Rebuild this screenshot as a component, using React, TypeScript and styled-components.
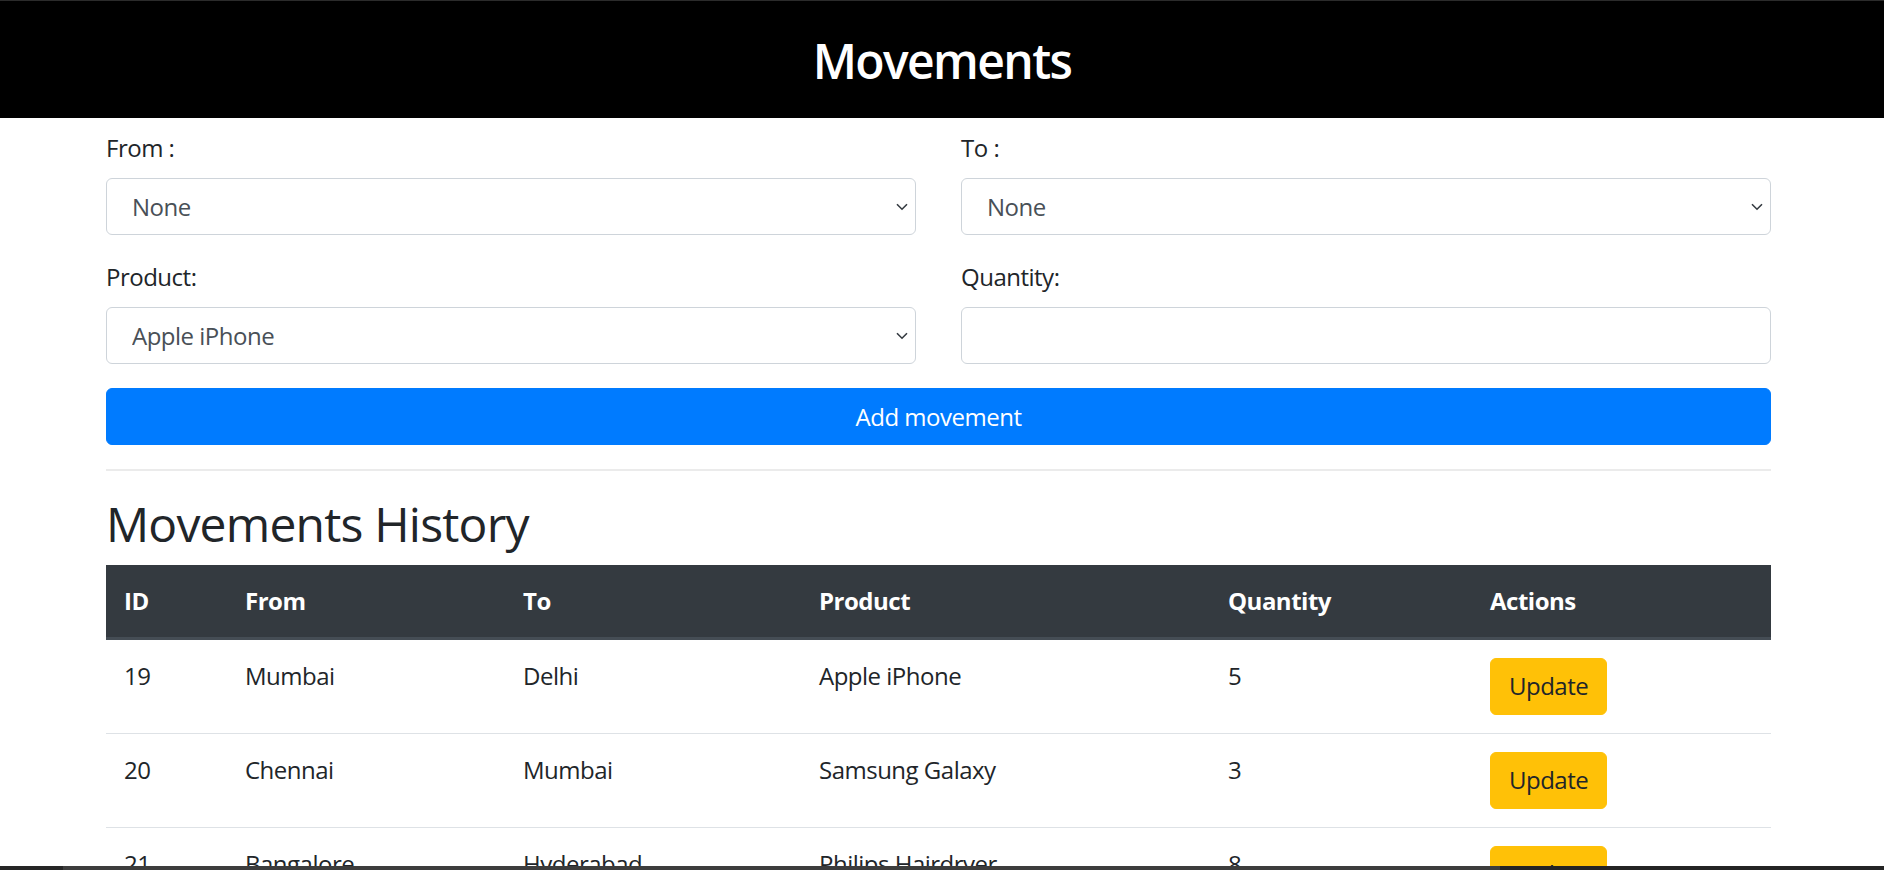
import React from 'react';
import styled, { createGlobalStyle } from 'styled-components';

// ==========================================
// Styles
// ==========================================

const GlobalStyle = createGlobalStyle`
  html, body {
    margin: 0;
    padding: 0;
    background: #ffffff;
  }
  body {
    font-family: "Open Sans", "Noto Sans", "Liberation Sans", sans-serif;
    font-size: 24px;
    line-height: 1.5;
    letter-spacing: -0.5px;
    color: #212529;
  }
  * { box-sizing: border-box; }
`;

const Header = styled.header`
  height: 118px;
  background: #000;
  border-top: 1px solid #2b2b2b;
  display: flex;
  align-items: center;
  justify-content: center;
`;

const Title = styled.h1`
  margin: 0;
  color: #fff;
  font-size: 48px;
  font-weight: 600;
  line-height: 1.2;
  letter-spacing: -1.6px;
  padding-top: 2px;
`;

const Container = styled.main`
  width: 1665px;
  margin-left: 106px;
  padding-top: 12px;
`;

const FormGrid = styled.div`
  display: grid;
  grid-template-columns: 1fr 1fr;
  column-gap: 45px;
`;

const FormGroup = styled.div`
  margin-bottom: 24px;
`;

const Label = styled.label`
  display: block;
  margin-bottom: 12px;
  line-height: 36px;
`;

const SelectWrap = styled.div`
  position: relative;
`;

const Select = styled.select`
  appearance: none;
  -webkit-appearance: none;
  width: 100%;
  height: 57px;
  padding: 0 40px 0 25px;
  font-family: inherit;
  font-size: 24px;
  letter-spacing: inherit;
  color: #495057;
  background: #fff;
  border: 1px solid #ced4da;
  border-radius: 6px;
  outline: none;
`;

const Chevron = styled.svg`
  position: absolute;
  right: 8px;
  top: 25px;
  pointer-events: none;
`;

const Input = styled.input`
  width: 100%;
  height: 57px;
  padding: 0 18px;
  font-family: inherit;
  font-size: 24px;
  color: #495057;
  background: #fff;
  border: 1px solid #ced4da;
  border-radius: 6px;
  outline: none;
`;

const Button = styled.button<{ $variant: 'primary' | 'warning'; $block?: boolean }>`
  display: ${p => (p.$block ? 'block' : 'inline-block')};
  width: ${p => (p.$block ? '100%' : 'auto')};
  height: 57px;
  padding: 0 18px;
  font-family: inherit;
  font-size: 24px;
  letter-spacing: inherit;
  line-height: 36px;
  border: 1px solid ${p => (p.$variant === 'primary' ? '#007bff' : '#ffc107')};
  border-radius: 6px;
  background: ${p => (p.$variant === 'primary' ? '#007bff' : '#ffc107')};
  color: ${p => (p.$variant === 'primary' ? '#fff' : '#212529')};
  cursor: pointer;
`;

const Divider = styled.hr`
  margin: 24px 0;
  border: 0;
  border-top: 2px solid #ebebeb;
`;

const SectionTitle = styled.h2`
  margin: 0 0 12px;
  font-size: 48px;
  font-weight: 500;
  line-height: 1.2;
  letter-spacing: -0.8px;
`;

const Table = styled.table`
  width: 100%;
  border-collapse: collapse;
  table-layout: fixed;
`;

const Th = styled.th`
  padding: 18px;
  text-align: left;
  font-weight: 700;
  line-height: 36px;
  color: #fff;
  background: #343a40;
  border-bottom: 3px solid #454d55;
`;

const Td = styled.td`
  padding: 18px;
  line-height: 36px;
  vertical-align: top;
  border-top: 1.5px solid #dee2e6;
`;

const BottomBar = styled.div`
  position: fixed;
  left: 0;
  right: 0;
  bottom: 0;
  height: 4px;
  background: linear-gradient(to right, #262626 0 63px, #3d3d3d 63px 1500px, #242424 1500px);
`;

// ==========================================
// Data
// ==========================================

interface Movement {
  id: number;
  from: string;
  to: string;
  product: string;
  quantity: number;
}

const movements: Movement[] = [
  { id: 19, from: 'Mumbai', to: 'Delhi', product: 'Apple iPhone', quantity: 5 },
  { id: 20, from: 'Chennai', to: 'Mumbai', product: 'Samsung Galaxy', quantity: 3 },
  { id: 21, from: 'Bangalore', to: 'Hyderabad', product: 'Philips Hairdryer', quantity: 8 },
];

const columns = [
  { label: 'ID', width: 121 },
  { label: 'From', width: 278 },
  { label: 'To', width: 296 },
  { label: 'Product', width: 409 },
  { label: 'Quantity', width: 262 },
  { label: 'Actions', width: 299 },
];

// ==========================================
// Components
// ==========================================

const SelectField: React.FC<{ options: string[] }> = ({ options }) => (
  <SelectWrap>
    <Select defaultValue={options[0]}>
      {options.map(o => (
        <option key={o}>{o}</option>
      ))}
    </Select>
    <Chevron width="12" height="8" viewBox="0 0 12 8">
      <path d="M1 1.2 L6 6.2 L11 1.2" fill="none" stroke="#343a40" strokeWidth="1.6" />
    </Chevron>
  </SelectWrap>
);

const App: React.FC = () => {
  return (
    <>
      <GlobalStyle />
      <Header>
        <Title>Movements</Title>
      </Header>
      <Container>
        <FormGrid>
          <FormGroup>
            <Label>From :</Label>
            <SelectField options={['None', 'Mumbai', 'Delhi', 'Chennai']} />
          </FormGroup>
          <FormGroup>
            <Label>To :</Label>
            <SelectField options={['None', 'Mumbai', 'Delhi', 'Chennai']} />
          </FormGroup>
          <FormGroup>
            <Label>Product:</Label>
            <SelectField options={['Apple iPhone', 'Samsung Galaxy', 'Philips Hairdryer']} />
          </FormGroup>
          <FormGroup>
            <Label>Quantity:</Label>
            <Input type="number" />
          </FormGroup>
        </FormGrid>
        <Button $variant="primary" $block>Add movement</Button>
        <Divider />
        <SectionTitle>Movements History</SectionTitle>
        <Table>
          <colgroup>
            {columns.map(c => (
              <col key={c.label} style={{ width: c.width }} />
            ))}
          </colgroup>
          <thead>
            <tr>
              {columns.map(c => (
                <Th key={c.label}>{c.label}</Th>
              ))}
            </tr>
          </thead>
          <tbody>
            {movements.map(m => (
              <tr key={m.id}>
                <Td>{m.id}</Td>
                <Td>{m.from}</Td>
                <Td>{m.to}</Td>
                <Td>{m.product}</Td>
                <Td>{m.quantity}</Td>
                <Td>
                  <Button $variant="warning">Update</Button>
                </Td>
              </tr>
            ))}
          </tbody>
        </Table>
      </Container>
      <BottomBar />
    </>
  );
};

export default App;
